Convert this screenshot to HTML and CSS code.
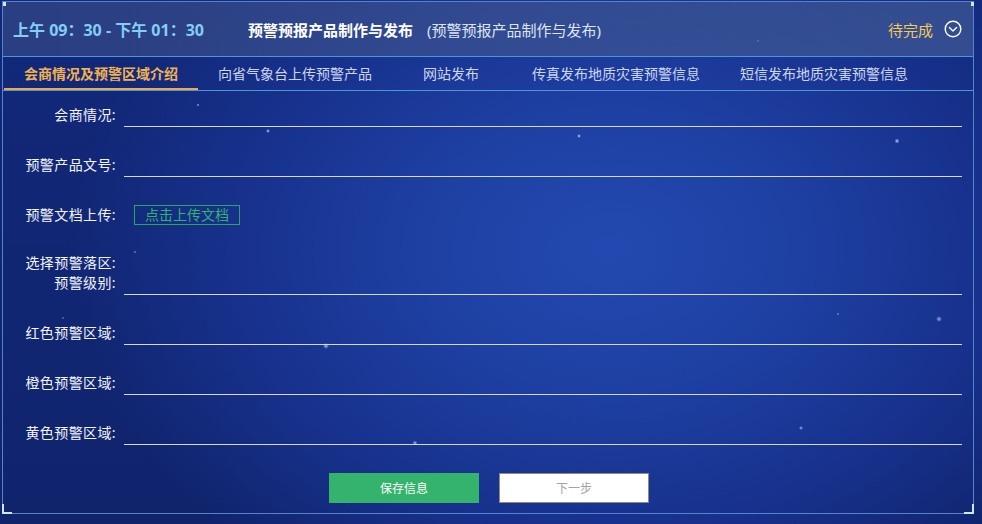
FILE: index.html
```html
<!DOCTYPE html>
<html lang="zh-CN">
<head>
    <meta charset="UTF-8">
    <meta name="viewport" content="width=device-width, initial-scale=1.0">
    <title>预警预报产品制作与发布</title>
    <link rel="stylesheet" href="styles.css">
</head>
<body>
    <div class="panel">
        <span class="corner corner-tl"></span>
        <span class="corner corner-tr"></span>
        <div class="head">
            <span class="time">上午 09：30 - 下午 01：30</span>
            <span class="title">预警预报产品制作与发布</span>
            <span class="sub">(预警预报产品制作与发布)</span>
            <span class="status">待完成</span>
            <svg class="toggle" width="18" height="18" viewBox="0 0 18 18">
                <circle cx="9" cy="9" r="7.8" fill="none" stroke="#fff" stroke-width="1.4"/>
                <path d="M5.4 7.6 L9 11 L12.6 7.6" fill="none" stroke="#fff" stroke-width="1.4" stroke-linecap="round" stroke-linejoin="round"/>
            </svg>
        </div>
        <ul class="tabs">
            <li class="current">会商情况及预警区域介绍</li>
            <li>向省气象台上传预警产品</li>
            <li>网站发布</li>
            <li>传真发布地质灾害预警信息</li>
            <li>短信发布地质灾害预警信息</li>
        </ul>
        <div class="form">
            <div class="row">
                <label class="label">会商情况:</label>
                <div class="field"></div>
            </div>
            <div class="row">
                <label class="label">预警产品文号:</label>
                <div class="field"></div>
            </div>
            <div class="row row-upload">
                <label class="label">预警文档上传:</label>
                <span class="upload">点击上传文档</span>
            </div>
            <div class="row row-double">
                <label class="label">选择预警落区:<br>预警级别:</label>
                <div class="field"></div>
            </div>
            <div class="row">
                <label class="label">红色预警区域:</label>
                <div class="field"></div>
            </div>
            <div class="row">
                <label class="label">橙色预警区域:</label>
                <div class="field"></div>
            </div>
            <div class="row">
                <label class="label">黄色预警区域:</label>
                <div class="field"></div>
            </div>
            <div class="actions">
                <button class="btn btn-save">保存信息</button>
                <button class="btn btn-next">下一步</button>
            </div>
        </div>
    </div>
</body>
</html>
```

FILE: styles.css
```css
*{
    margin:0;
    padding:0;
    list-style:none;
    box-sizing: border-box;
}
html,body{
    height: 100%;
}
body{
    font-family: "Noto Sans", "Noto Sans CJK SC", sans-serif;
    color: #fff;
    background-color: #10256f;
    /* 星点 + 中间偏亮的蓝色底 */
    background-image:
        radial-gradient(circle at 198px 105px, rgba(200,220,255,.8) 0, rgba(200,220,255,0) 1.5px),
        radial-gradient(circle at 268px 131px, rgba(200,220,255,.9) 0, rgba(200,220,255,0) 2px),
        radial-gradient(circle at 579px 136px, rgba(200,220,255,.9) 0, rgba(200,220,255,0) 2px),
        radial-gradient(circle at 897px 141px, rgba(200,220,255,.9) 0, rgba(200,220,255,0) 2.5px),
        radial-gradient(circle at 758px 41px, rgba(200,220,255,.7) 0, rgba(200,220,255,0) 1.5px),
        radial-gradient(circle at 135px 252px, rgba(200,220,255,.6) 0, rgba(200,220,255,0) 1.5px),
        radial-gradient(circle at 326px 346px, rgba(200,220,255,.8) 0, rgba(200,220,255,0) 3px),
        radial-gradient(circle at 939px 319px, rgba(200,220,255,.7) 0, rgba(200,220,255,0) 3px),
        radial-gradient(circle at 838px 314px, rgba(200,220,255,.6) 0, rgba(200,220,255,0) 1.5px),
        radial-gradient(circle at 415px 443px, rgba(200,220,255,.8) 0, rgba(200,220,255,0) 2.5px),
        radial-gradient(circle at 801px 428px, rgba(200,220,255,.8) 0, rgba(200,220,255,0) 2px),
        radial-gradient(circle at 63px 318px, rgba(200,220,255,.5) 0, rgba(200,220,255,0) 1.5px),
        radial-gradient(ellipse 540px 400px at 610px 250px, #2349b0 0%, #1e40a3 35%, #17318c 70%, rgba(16,37,111,0) 100%),
        linear-gradient(180deg, #12287a 0%, #10246c 100%);
    background-repeat: no-repeat;
}
.panel{
    position: relative;
    width: 972px;
    height: 513px;
    margin: 1px 0 0 2px;
    border: 1px solid #5583cc;
}
/* 四个角的小白边 */
.corner{
    position: absolute;
    width: 3px;
    height: 4px;
    background-color: #cfe6ff;
    top: 0;
}
.corner-tl{
    left: 0;
}
.corner-tr{
    right: -1px;
}
.panel::before,
.panel::after{
    content: '';
    position: absolute;
    bottom: -1px;
    width: 8px;
    height: 8px;
    border-bottom: 2px solid #cfe6ff;
}
.panel::before{
    left: -1px;
    border-left: 2px solid #cfe6ff;
}
.panel::after{
    right: -1px;
    border-right: 2px solid #cfe6ff;
}
.head{
    display: flex;
    align-items: center;
    height: 55px;
    padding: 0 11px 0 10px;
    border-bottom: 1px solid #4a97d8;
    background: linear-gradient(90deg, rgba(58,78,135,.6) 0%, rgba(72,98,152,.6) 100%);
}
.time{
    width: 235px;
    font-size: 16px;
    font-weight: bold;
    color: #84cdf5;
}
.title{
    font-size: 15px;
    font-weight: bold;
}
.sub{
    margin-left: 14px;
    font-size: 15px;
    color: #dfe5f3;
}
.status{
    margin-left: auto;
    font-size: 15px;
    color: #f4c859;
}
.toggle{
    margin-left: 11px;
    display: block;
}
.tabs{
    display: flex;
    height: 34px;
    padding-left: 1px;
    border-bottom: 1px solid #4a97d8;
}
.tabs li{
    padding: 0 20px;
    line-height: 33px;
    font-size: 14px;
    color: #cdd6f0;
    cursor: pointer;
}
.tabs li:nth-child(3){
    margin-left: 11px;
}
.tabs li:nth-child(4){
    margin-left: 13px;
}
.tabs .current{
    color: #f1b352;
    font-weight: bold;
    box-shadow: inset 0 -2px 0 #e9a94c;
}
.form{
    padding-top: 14px;
}
.row{
    display: flex;
    align-items: flex-start;
    margin-bottom: 28px;
}
.label{
    width: 113px;
    flex-shrink: 0;
    text-align: right;
    font-size: 14px;
    line-height: 20px;
    letter-spacing: 0.4px;
    color: #f2f4fa;
}
.field{
    flex: 1;
    height: 22px;
    margin: 0 11px 0 8px;
    border-bottom: 1px solid #d9d9d9;
}
.row-upload{
    height: 20px;
}
.upload{
    margin-left: 18px;
    padding: 0 10px;
    height: 20px;
    line-height: 18px;
    font-size: 14px;
    color: #32b46c;
    border: 1px solid #27a85e;
    cursor: pointer;
}
.row-double{
    align-items: flex-end;
}
.row-double .label{
    margin-bottom: 2px;
}
.actions{
    display: flex;
    justify-content: center;
    gap: 20px;
    padding-left: 2px;
}
.btn{
    width: 150px;
    height: 30px;
    font-family: inherit;
    font-size: 12px;
    cursor: pointer;
}
.btn-save{
    border: none;
    background-color: #33b36b;
    color: #fff;
}
.btn-next{
    border: 1px solid #8a8a8a;
    background-color: #fff;
    color: #a2a2a2;
}
```
